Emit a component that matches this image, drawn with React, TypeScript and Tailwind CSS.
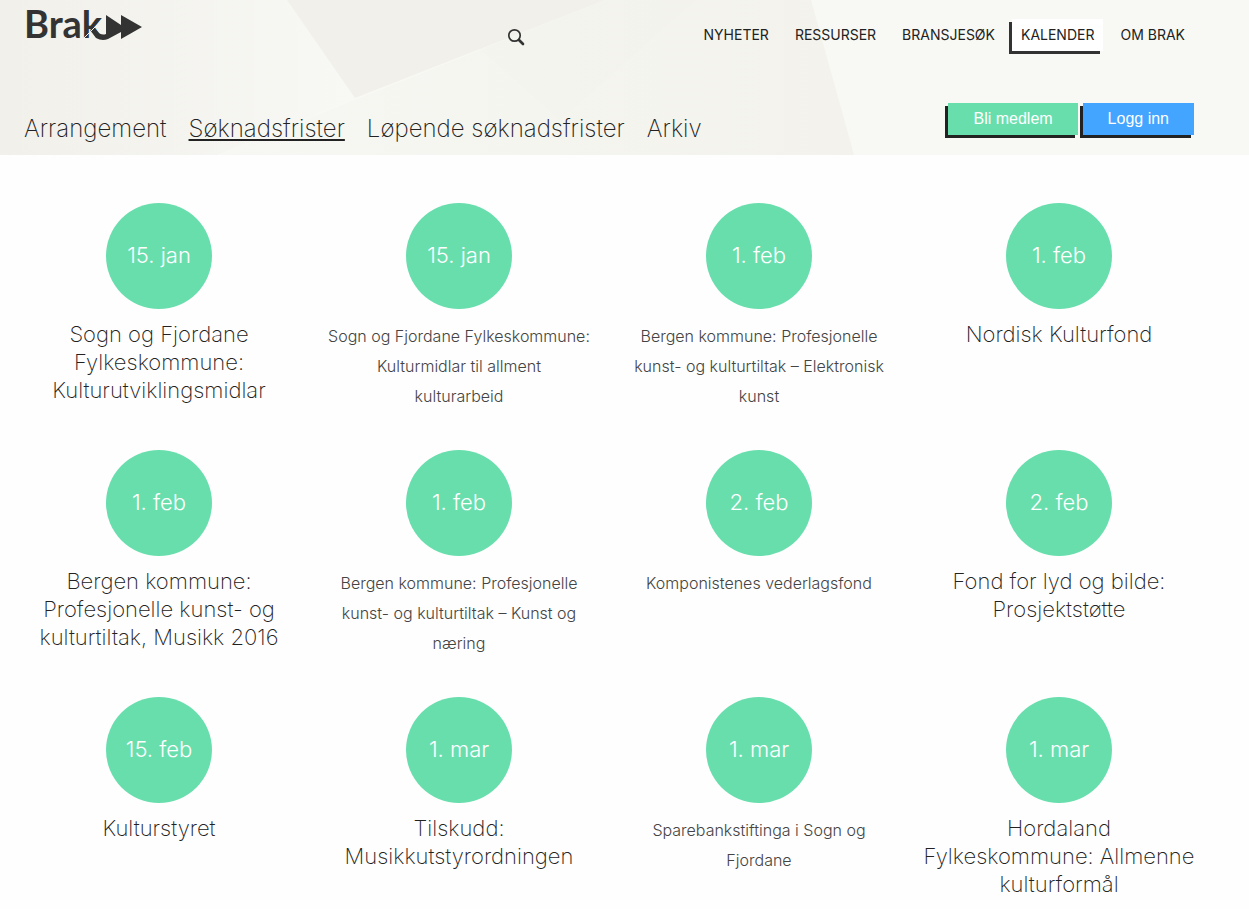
import clsx from 'clsx';

type Deadline = {
  date: string;
  title: string;
  large?: boolean;
};

const mainNav = ['Nyheter', 'Ressurser', 'Bransjesøk', 'Kalender', 'Om Brak'];

const subNav = ['Arrangement', 'Søknadsfrister', 'Løpende søknadsfrister', 'Arkiv'];

const deadlines: Deadline[] = [
  { date: '15. jan', title: 'Sogn og Fjordane Fylkeskommune: Kulturutviklingsmidlar', large: true },
  { date: '15. jan', title: 'Sogn og Fjordane Fylkeskommune: Kulturmidlar til allment\nkulturarbeid' },
  { date: '1. feb', title: 'Bergen kommune: Profesjonelle kunst- og kulturtiltak – Elektronisk kunst' },
  { date: '1. feb', title: 'Nordisk Kulturfond', large: true },
  { date: '1. feb', title: 'Bergen kommune: Profesjonelle kunst- og kulturtiltak, Musikk 2016', large: true },
  { date: '1. feb', title: 'Bergen kommune: Profesjonelle kunst- og kulturtiltak – Kunst og\nnæring' },
  { date: '2. feb', title: 'Komponistenes vederlagsfond' },
  { date: '2. feb', title: 'Fond for lyd og bilde: Prosjektstøtte', large: true },
  { date: '15. feb', title: 'Kulturstyret', large: true },
  { date: '1. mar', title: 'Tilskudd: Musikkutstyrordningen', large: true },
  { date: '1. mar', title: 'Sparebankstiftinga i Sogn og\nFjordane' },
  { date: '1. mar', title: 'Hordaland\nFylkeskommune: Allmenne kulturformål', large: true },
];

function HeaderBackground() {
  return (
    <svg
      className="absolute inset-0 h-full w-full"
      viewBox="0 0 1249 155"
      preserveAspectRatio="xMinYMin slice"
      aria-hidden="true"
    >
      <defs>
        <linearGradient id="left" x1="0" y1="0" x2="1" y2="0">
          <stop offset="0" stopColor="#f1f0eb" />
          <stop offset="1" stopColor="#f8f8f4" />
        </linearGradient>
        <linearGradient id="middle" x1="0" y1="0" x2="1" y2="0">
          <stop offset="0" stopColor="#f7f8f3" />
          <stop offset="1" stopColor="#f3f2ed" />
        </linearGradient>
      </defs>
      <path d="M0 0H287L355 98L217 155H0Z" fill="url(#left)" />
      <path d="M287 0H605L355 98Z" fill="#f1f0eb" />
      <path d="M605 0H811L854 155H217Z" fill="url(#middle)" />
      <path d="M605 0H697L560 120L480 49Z" fill="#f2f1ec" opacity="0.3" />
    </svg>
  );
}

function Logo() {
  return (
    <svg width="120" height="50" viewBox="0 0 120 50" fill="#333">
      <text x="0" y="38" fontSize="38" fontWeight="700" fontFamily="Lato, sans-serif">
        Brak
      </text>
      <path d="M82 15L97 25V15L118 27L97 39V32L84 39Q78 41.500 72 38L66 30L70 28L73 31Q77 36 82 34Z" />
      <path d="M57 41L78 20" stroke="#f3f2ee" strokeWidth="1" />
    </svg>
  );
}

function DeadlineItem({ date, title, large }: Deadline) {
  return (
    <li className="min-h-[247px] px-3 text-center">
      <a href="#" className="flex flex-col items-center">
        <span className="flex size-[106px] items-center justify-center rounded-full bg-[#69dead] pb-0.5 text-[22px] font-light text-white">
          {date}
        </span>
        <h2
          className={clsx(
            'whitespace-pre-line',
            large ? 'mt-[11px] text-[22px] leading-7' : 'mt-3 text-base font-light leading-[30px] text-[#444]'
          )}
        >
          {title}
        </h2>
      </a>
    </li>
  );
}

export default function App() {
  return (
    <div className="min-h-screen bg-[#fefefe] font-['Inter',sans-serif] font-extralight text-[#222]">
      <header className="relative bg-[#f8f9f4] pl-6 pr-[55px]">
        <HeaderBackground />
        <div className="relative flex h-[103px] items-start justify-between">
          <a href="#" aria-label="Brak">
            <Logo />
          </a>
          <button aria-label="Søk" className="ml-[194px] mt-7">
            <svg width="18" height="18" viewBox="0 0 18 18" fill="none" stroke="#333">
              <circle cx="7.5" cy="7.5" r="5.7" strokeWidth="1.7" />
              <path d="M12 12L16 16" strokeWidth="2.6" strokeLinecap="round" />
            </svg>
          </button>
          <nav className="mt-[19px] flex gap-2 text-sm font-normal">
            {mainNav.map((item) => (
              <a
                key={item}
                href="#"
                className={clsx(
                  'px-[9px] py-[6px] uppercase leading-5',
                  item === 'Kalender' && 'bg-white shadow-[-3px_3px_0_#333]'
                )}
              >
                {item}
              </a>
            ))}
          </nav>
        </div>

        <div className="relative flex h-[52px] items-start justify-between">
          <nav className="mt-[10px] flex gap-[22px] text-2xl leading-8">
            {subNav.map((item) => (
              <a
                key={item}
                href="#"
                className={clsx(item === 'Søknadsfrister' && 'underline decoration-2 underline-offset-2')}
              >
                {item}
              </a>
            ))}
          </nav>
          <div className="flex gap-[5px] font-['Liberation_Sans',sans-serif] font-normal text-white">
            <button className="h-8 bg-[#69dead] px-[25px] shadow-[-3px_3px_0_#222]">Bli medlem</button>
            <button className="h-8 bg-[#43a5ff] px-[25px] shadow-[-3px_3px_0_#222]">Logg inn</button>
          </div>
        </div>
      </header>

      <main className="pl-[9px] pr-10 pt-12">
        <ul className="grid grid-cols-4">
          {deadlines.map((deadline) => (
            <DeadlineItem key={deadline.title} {...deadline} />
          ))}
        </ul>
      </main>
    </div>
  );
}
